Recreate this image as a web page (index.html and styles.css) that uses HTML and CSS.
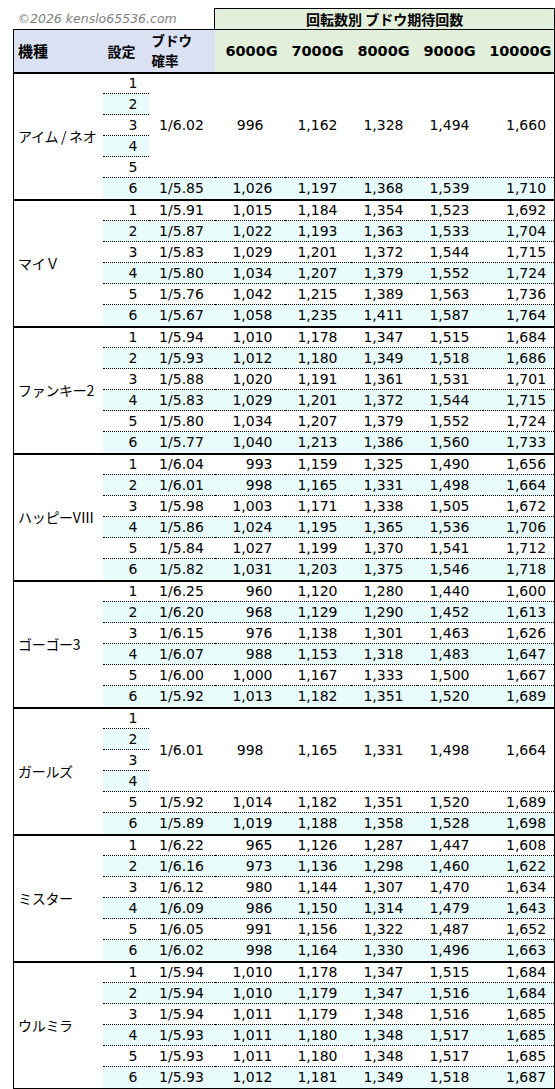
FILE: index.html
```html
<!DOCTYPE html>
<html lang="ja">
<head>
<meta charset="utf-8">
<title>回転数別 ブドウ期待回数</title>
<link rel="stylesheet" href="styles.css">
</head>
<body>
<div class="page">
<table class="bd">
<colgroup>
<col class="c-m"><col class="c-s"><col class="c-p"><col class="c-g1"><col class="c-g"><col class="c-g"><col class="c-g"><col class="c-g5">
</colgroup>
<thead>
<tr class="title-row">
<td class="copy" colspan="3">©2026 kenslo65536.com</td>
<th class="title" colspan="5">回転数別 ブドウ期待回数</th>
</tr>
<tr class="head-row">
<th class="h-m">機種</th>
<th class="h-s">設定</th>
<th class="h-p"><span class="hl">ブドウ</span><span class="hl">確率</span></th>
<th class="g g1">6000G</th>
<th class="g">7000G</th>
<th class="g">8000G</th>
<th class="g">9000G</th>
<th class="g g5">10000G</th>
</tr>
</thead>
<tbody>
<!-- アイム / ネオ -->
<tr><td class="m" rowspan="6">アイム / ネオ</td><td class="s">1</td><td class="p" rowspan="5">1/6.02</td><td class="v v1 mv1" rowspan="5">996</td><td class="v" rowspan="5">1,162</td><td class="v" rowspan="5">1,328</td><td class="v" rowspan="5">1,494</td><td class="v v5" rowspan="5">1,660</td></tr>
<tr class="alt"><td class="s">2</td></tr>
<tr><td class="s">3</td></tr>
<tr class="alt"><td class="s">4</td></tr>
<tr><td class="s">5</td></tr>
<tr class="alt end"><td class="s">6</td><td class="p">1/5.85</td><td class="v v1">1,026</td><td class="v">1,197</td><td class="v">1,368</td><td class="v">1,539</td><td class="v v5">1,710</td></tr>
<!-- マイV -->
<tr><td class="m" rowspan="6">マイＶ</td><td class="s">1</td><td class="p">1/5.91</td><td class="v v1">1,015</td><td class="v">1,184</td><td class="v">1,354</td><td class="v">1,523</td><td class="v v5">1,692</td></tr>
<tr class="alt"><td class="s">2</td><td class="p">1/5.87</td><td class="v v1">1,022</td><td class="v">1,193</td><td class="v">1,363</td><td class="v">1,533</td><td class="v v5">1,704</td></tr>
<tr><td class="s">3</td><td class="p">1/5.83</td><td class="v v1">1,029</td><td class="v">1,201</td><td class="v">1,372</td><td class="v">1,544</td><td class="v v5">1,715</td></tr>
<tr class="alt"><td class="s">4</td><td class="p">1/5.80</td><td class="v v1">1,034</td><td class="v">1,207</td><td class="v">1,379</td><td class="v">1,552</td><td class="v v5">1,724</td></tr>
<tr><td class="s">5</td><td class="p">1/5.76</td><td class="v v1">1,042</td><td class="v">1,215</td><td class="v">1,389</td><td class="v">1,563</td><td class="v v5">1,736</td></tr>
<tr class="alt end"><td class="s">6</td><td class="p">1/5.67</td><td class="v v1">1,058</td><td class="v">1,235</td><td class="v">1,411</td><td class="v">1,587</td><td class="v v5">1,764</td></tr>
<!-- ファンキー2 -->
<tr><td class="m" rowspan="6">ファンキー2</td><td class="s">1</td><td class="p">1/5.94</td><td class="v v1">1,010</td><td class="v">1,178</td><td class="v">1,347</td><td class="v">1,515</td><td class="v v5">1,684</td></tr>
<tr class="alt"><td class="s">2</td><td class="p">1/5.93</td><td class="v v1">1,012</td><td class="v">1,180</td><td class="v">1,349</td><td class="v">1,518</td><td class="v v5">1,686</td></tr>
<tr><td class="s">3</td><td class="p">1/5.88</td><td class="v v1">1,020</td><td class="v">1,191</td><td class="v">1,361</td><td class="v">1,531</td><td class="v v5">1,701</td></tr>
<tr class="alt"><td class="s">4</td><td class="p">1/5.83</td><td class="v v1">1,029</td><td class="v">1,201</td><td class="v">1,372</td><td class="v">1,544</td><td class="v v5">1,715</td></tr>
<tr><td class="s">5</td><td class="p">1/5.80</td><td class="v v1">1,034</td><td class="v">1,207</td><td class="v">1,379</td><td class="v">1,552</td><td class="v v5">1,724</td></tr>
<tr class="alt end"><td class="s">6</td><td class="p">1/5.77</td><td class="v v1">1,040</td><td class="v">1,213</td><td class="v">1,386</td><td class="v">1,560</td><td class="v v5">1,733</td></tr>
<!-- ハッピーVⅢ -->
<tr><td class="m" rowspan="6">ハッピーVⅢ</td><td class="s">1</td><td class="p">1/6.04</td><td class="v v1">993</td><td class="v">1,159</td><td class="v">1,325</td><td class="v">1,490</td><td class="v v5">1,656</td></tr>
<tr class="alt"><td class="s">2</td><td class="p">1/6.01</td><td class="v v1">998</td><td class="v">1,165</td><td class="v">1,331</td><td class="v">1,498</td><td class="v v5">1,664</td></tr>
<tr><td class="s">3</td><td class="p">1/5.98</td><td class="v v1">1,003</td><td class="v">1,171</td><td class="v">1,338</td><td class="v">1,505</td><td class="v v5">1,672</td></tr>
<tr class="alt"><td class="s">4</td><td class="p">1/5.86</td><td class="v v1">1,024</td><td class="v">1,195</td><td class="v">1,365</td><td class="v">1,536</td><td class="v v5">1,706</td></tr>
<tr><td class="s">5</td><td class="p">1/5.84</td><td class="v v1">1,027</td><td class="v">1,199</td><td class="v">1,370</td><td class="v">1,541</td><td class="v v5">1,712</td></tr>
<tr class="alt end"><td class="s">6</td><td class="p">1/5.82</td><td class="v v1">1,031</td><td class="v">1,203</td><td class="v">1,375</td><td class="v">1,546</td><td class="v v5">1,718</td></tr>
<!-- ゴーゴー3 -->
<tr><td class="m" rowspan="6">ゴーゴー3</td><td class="s">1</td><td class="p">1/6.25</td><td class="v v1">960</td><td class="v">1,120</td><td class="v">1,280</td><td class="v">1,440</td><td class="v v5">1,600</td></tr>
<tr class="alt"><td class="s">2</td><td class="p">1/6.20</td><td class="v v1">968</td><td class="v">1,129</td><td class="v">1,290</td><td class="v">1,452</td><td class="v v5">1,613</td></tr>
<tr><td class="s">3</td><td class="p">1/6.15</td><td class="v v1">976</td><td class="v">1,138</td><td class="v">1,301</td><td class="v">1,463</td><td class="v v5">1,626</td></tr>
<tr class="alt"><td class="s">4</td><td class="p">1/6.07</td><td class="v v1">988</td><td class="v">1,153</td><td class="v">1,318</td><td class="v">1,483</td><td class="v v5">1,647</td></tr>
<tr><td class="s">5</td><td class="p">1/6.00</td><td class="v v1">1,000</td><td class="v">1,167</td><td class="v">1,333</td><td class="v">1,500</td><td class="v v5">1,667</td></tr>
<tr class="alt end"><td class="s">6</td><td class="p">1/5.92</td><td class="v v1">1,013</td><td class="v">1,182</td><td class="v">1,351</td><td class="v">1,520</td><td class="v v5">1,689</td></tr>
<!-- ガールズ -->
<tr><td class="m" rowspan="6">ガールズ</td><td class="s">1</td><td class="p" rowspan="4">1/6.01</td><td class="v v1 mv1" rowspan="4">998</td><td class="v" rowspan="4">1,165</td><td class="v" rowspan="4">1,331</td><td class="v" rowspan="4">1,498</td><td class="v v5" rowspan="4">1,664</td></tr>
<tr class="alt"><td class="s">2</td></tr>
<tr><td class="s">3</td></tr>
<tr class="alt"><td class="s">4</td></tr>
<tr><td class="s">5</td><td class="p">1/5.92</td><td class="v v1">1,014</td><td class="v">1,182</td><td class="v">1,351</td><td class="v">1,520</td><td class="v v5">1,689</td></tr>
<tr class="alt end"><td class="s">6</td><td class="p">1/5.89</td><td class="v v1">1,019</td><td class="v">1,188</td><td class="v">1,358</td><td class="v">1,528</td><td class="v v5">1,698</td></tr>
<!-- ミスター -->
<tr><td class="m" rowspan="6">ミスター</td><td class="s">1</td><td class="p">1/6.22</td><td class="v v1">965</td><td class="v">1,126</td><td class="v">1,287</td><td class="v">1,447</td><td class="v v5">1,608</td></tr>
<tr class="alt"><td class="s">2</td><td class="p">1/6.16</td><td class="v v1">973</td><td class="v">1,136</td><td class="v">1,298</td><td class="v">1,460</td><td class="v v5">1,622</td></tr>
<tr><td class="s">3</td><td class="p">1/6.12</td><td class="v v1">980</td><td class="v">1,144</td><td class="v">1,307</td><td class="v">1,470</td><td class="v v5">1,634</td></tr>
<tr class="alt"><td class="s">4</td><td class="p">1/6.09</td><td class="v v1">986</td><td class="v">1,150</td><td class="v">1,314</td><td class="v">1,479</td><td class="v v5">1,643</td></tr>
<tr><td class="s">5</td><td class="p">1/6.05</td><td class="v v1">991</td><td class="v">1,156</td><td class="v">1,322</td><td class="v">1,487</td><td class="v v5">1,652</td></tr>
<tr class="alt end"><td class="s">6</td><td class="p">1/6.02</td><td class="v v1">998</td><td class="v">1,164</td><td class="v">1,330</td><td class="v">1,496</td><td class="v v5">1,663</td></tr>
<!-- ウルミラ -->
<tr><td class="m" rowspan="6">ウルミラ</td><td class="s">1</td><td class="p">1/5.94</td><td class="v v1">1,010</td><td class="v">1,178</td><td class="v">1,347</td><td class="v">1,515</td><td class="v v5">1,684</td></tr>
<tr class="alt"><td class="s">2</td><td class="p">1/5.94</td><td class="v v1">1,010</td><td class="v">1,179</td><td class="v">1,347</td><td class="v">1,516</td><td class="v v5">1,684</td></tr>
<tr><td class="s">3</td><td class="p">1/5.94</td><td class="v v1">1,011</td><td class="v">1,179</td><td class="v">1,348</td><td class="v">1,516</td><td class="v v5">1,685</td></tr>
<tr class="alt"><td class="s">4</td><td class="p">1/5.93</td><td class="v v1">1,011</td><td class="v">1,180</td><td class="v">1,348</td><td class="v">1,517</td><td class="v v5">1,685</td></tr>
<tr><td class="s">5</td><td class="p">1/5.93</td><td class="v v1">1,011</td><td class="v">1,180</td><td class="v">1,348</td><td class="v">1,517</td><td class="v v5">1,685</td></tr>
<tr class="alt end"><td class="s">6</td><td class="p">1/5.93</td><td class="v v1">1,012</td><td class="v">1,181</td><td class="v">1,349</td><td class="v">1,518</td><td class="v v5">1,687</td></tr>
</tbody>
</table>
</div>
</body>
</html>
```

FILE: styles.css
```css
html, body {
  margin: 0;
  padding: 0;
  background: #ffffff;
}

body {
  font-family: "DejaVu Sans", "Noto Sans CJK JP", sans-serif;
  color: #000000;
}

.page {
  padding: 8px 0 0 13px;
}

.bd {
  border-collapse: collapse;
  table-layout: fixed;
  width: 541px;
  font-size: 14px;
}

.c-m { width: 89px; }
.c-s { width: 46px; }
.c-p { width: 66px; }
.c-g1 { width: 70px; }
.c-g { width: 66px; }
.c-g5 { width: 72px; }

.bd td,
.bd th {
  padding: 0;
  white-space: nowrap;
  vertical-align: middle;
}

/* title row */
.title-row {
  height: 21px;
}

.copy {
  font-family: "DejaVu Sans", sans-serif;
  font-style: italic;
  font-size: 12.5px;
  color: #7f7f7f;
  text-align: left;
  padding-left: 4px !important;
}

.title {
  background: #e2efda;
  border: 1px solid #000;
  font-family: "Noto Sans CJK JP", sans-serif;
  font-weight: bold;
  font-size: 14px;
  text-align: center;
}

/* header row */
.head-row {
  height: 43px;
}

.head-row th {
  background: #d9e1f2;
  border-top: 1px solid #000;
  border-bottom: 2px solid #000;
  font-weight: bold;
  font-size: 14.5px;
}

.head-row .g {
  background: #e2efda;
  text-align: center;
}

.head-row .g1 {
  padding-left: 4px;
}

.head-row .g5 {
  padding-left: 4px;
  border-right: 1px solid #000;
}

.h-m {
  border-left: 1px solid #000;
  text-align: left;
  padding-left: 4px !important;
  font-family: "Noto Sans CJK JP", sans-serif;
  font-size: 15px !important;
}

.h-s {
  text-align: left;
  padding-left: 5px !important;
  font-family: "Noto Sans CJK JP", sans-serif;
  font-size: 14px !important;
}

.h-p {
  text-align: left;
  padding-left: 3px !important;
  font-family: "Noto Sans CJK JP", sans-serif;
  font-size: 13.5px !important;
}

.hl {
  display: block;
  line-height: 19.5px;
}

/* body */
.bd tbody tr {
  height: 21px;
}

.bd tbody tr.end {
  height: 22px;
}

.bd tbody td {
  border-bottom: 1px dotted #000;
}

.bd tbody tr.end td,
.bd tbody td.m {
  border-bottom: 2px solid #000;
}

.bd tbody tr.alt td {
  background: #e9fcfc;
}

.m {
  border-left: 1px solid #000;
  text-align: left;
  padding-left: 4px !important;
  font-family: "Noto Sans CJK JP", sans-serif;
  font-size: 14px;
  letter-spacing: -0.3px;
  background: #ffffff;
}

.s {
  text-align: right;
  padding-right: 11px !important;
}

.p {
  text-align: center;
}

.v {
  text-align: right;
  padding-right: 13px !important;
}

.v1 {
  padding-right: 12px !important;
}

.mv1 {
  padding-right: 21px !important;
}

.v5 {
  padding-right: 8px !important;
  border-right: 1px solid #000;
}
```
